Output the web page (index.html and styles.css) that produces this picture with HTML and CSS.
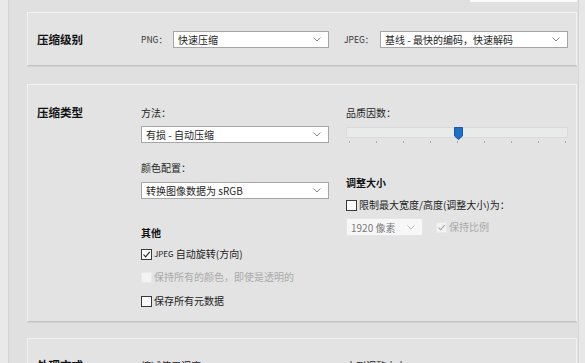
FILE: index.html
```html
<!DOCTYPE html>
<html lang="zh-CN">
<head>
    <meta charset="UTF-8">
    <meta name="viewport" content="width=device-width, initial-scale=1">
    <title>导出设置</title>
    <link rel="stylesheet" href="styles.css">
</head>
<body>
    <div class="page">
        <div class="side-left"></div>
        <div class="main">
            <div class="top-strip"><span class="top-block"></span></div>

            <div class="panel panel-level">
                <div class="section-title">压缩级别</div>
                <div class="field-inline">
                    <span class="inline-label">PNG：</span>
                    <div class="select">快速压缩<svg class="chev" width="8" height="5" viewBox="0 0 8 5"><path d="M0.5 0.5 L4 4 L7.5 0.5" fill="none" stroke="#888" stroke-width="1"/></svg></div>
                </div>
                <div class="field-inline jpeg">
                    <span class="inline-label">JPEG：</span>
                    <div class="select">基线 - 最快的编码，快速解码<svg class="chev" width="8" height="5" viewBox="0 0 8 5"><path d="M0.5 0.5 L4 4 L7.5 0.5" fill="none" stroke="#888" stroke-width="1"/></svg></div>
                </div>
            </div>

            <div class="panel panel-type">
                <div class="section-title">压缩类型</div>
                <div class="col col-left">
                    <div class="label">方法：</div>
                    <div class="select mt6">有损 - 自动压缩<svg class="chev" width="8" height="5" viewBox="0 0 8 5"><path d="M0.5 0.5 L4 4 L7.5 0.5" fill="none" stroke="#888" stroke-width="1"/></svg></div>
                    <div class="label mt18">颜色配置：</div>
                    <div class="select mt7">转换图像数据为 sRGB<svg class="chev" width="8" height="5" viewBox="0 0 8 5"><path d="M0.5 0.5 L4 4 L7.5 0.5" fill="none" stroke="#888" stroke-width="1"/></svg></div>
                    <div class="sub-title mt27">其他</div>
                    <label class="check mt7"><span class="box checked"><svg width="9" height="9" viewBox="0 0 9 9"><path d="M1.5 4.5 L3.6 6.8 L7.8 1.8" fill="none" stroke="#222" stroke-width="1.1"/></svg></span><span class="small-caps">JPEG</span>&nbsp;自动旋转(方向)</label>
                    <label class="check disabled mt9"><span class="box"></span>保持所有的颜色，即使是透明的</label>
                    <label class="check mt10"><span class="box"></span>保存所有元数据</label>
                </div>
                <div class="col col-right">
                    <div class="label">品质因数：</div>
                    <div class="slider mt7">
                        <svg class="thumb" width="9" height="13" viewBox="0 0 9 13"><path d="M0.5 0.5 H8.5 V9 L4.5 12.5 L0.5 9 Z" fill="#1f6fc6" stroke="#1559a8" stroke-width="1"/></svg>
                    </div>
                    <div class="ticks">
                        <i></i><i></i><i></i><i></i><i></i><i></i><i></i><i></i><i></i>
                    </div>
                    <div class="sub-title mt33">调整大小</div>
                    <label class="check mt8"><span class="box"></span>限制最大宽度/高度(调整大小)为：</label>
                    <div class="resize-row mt6">
                        <div class="select small disabled">1920 像素<svg class="chev" width="8" height="5" viewBox="0 0 8 5"><path d="M0.5 0.5 L4 4 L7.5 0.5" fill="none" stroke="#bbb" stroke-width="1"/></svg></div>
                        <label class="check disabled"><span class="box"><svg width="9" height="9" viewBox="0 0 9 9"><path d="M1.5 4.5 L3.6 6.8 L7.8 1.8" fill="none" stroke="#aaa" stroke-width="1.1"/></svg></span>保持比例</label>
                    </div>
                </div>
            </div>

            <div class="panel panel-more">
                <div class="section-title">处理方式</div>
                <div class="col"><div class="label">缩减使用调度</div></div>
                <div class="col"><div class="label">小到调整大小</div></div>
            </div>
        </div>
        <div class="side-right"></div>
    </div>
</body>
</html>
```

FILE: styles.css
```css
body {
    margin: 0;
    font-family: "Noto Sans CJK SC", "Noto Sans", sans-serif;
    font-size: 10px;
    color: #262626;
    background: #e0e0e0;
}
.page {
    display: flex;
    height: 363px;
    overflow: hidden;
}
.side-left {
    flex: none;
    width: 8px;
    background: #e9e9e9;
    border-right: 1px solid #d4d4d4;
}
.side-right {
    flex: none;
    width: 6px;
    background: #e7e7e7;
    border-left: 1px solid #d6d6d6;
}
.main {
    flex: 1;
    min-width: 0;
    padding: 10px 1px 0 18px;
}
.top-strip {
    display: flex;
    justify-content: flex-end;
    height: 2px;
    margin-top: -10px;
    margin-bottom: 10px;
}
.top-block {
    width: 107px;
    height: 2px;
    background: #fafafa;
}
.panel {
    display: grid;
    grid-template-columns: 87px 188px 222px;
    column-gap: 17px;
    padding: 0 7px 0 9px;
    background: #e3e3e3;
    border: 1px solid #f1f1f1;
    border-bottom-color: #c3c3c3;
    box-shadow: 0 1px 0 #d3d3d3;
}
.panel-level {
    height: 52px;
    align-items: center;
}
.panel-type {
    margin-top: 18px;
    height: 238px;
    padding-top: 19px;
    box-sizing: border-box;
    align-items: start;
}
.panel-more {
    margin-top: 16px;
    height: 60px;
    padding-top: 18px;
    box-sizing: border-box;
    align-items: start;
}
.section-title {
    font-size: 11.5px;
    font-weight: bold;
    color: #111;
    line-height: 16px;
}
.field-inline {
    display: flex;
    align-items: center;
}
.field-inline.jpeg {
    margin-left: -2px;
}
.inline-label {
    font-size: 8.5px;
    width: 32px;
    color: #333;
}
.jpeg .inline-label {
    width: 36px;
}
.select {
    flex: 1;
    display: flex;
    align-items: center;
    justify-content: space-between;
    height: 15px;
    padding: 0 7px 0 4px;
    background: #fff;
    border: 1px solid #a6a6a6;
    font-size: 10px;
    color: #1e1e1e;
    line-height: 15px;
}
.select.small {
    flex: none;
    width: 64px;
    height: 16px;
}
.select.disabled {
    border-color: #e6e6e6;
    background: #f7f7f7;
    color: #7a7a7a;
}
.col {
    display: flex;
    flex-direction: column;
    padding-top: 2px;
}
.label {
    line-height: 14px;
}
.sub-title {
    font-weight: bold;
    color: #111;
    line-height: 14px;
}
.check {
    display: flex;
    align-items: center;
    line-height: 14px;
    color: #222;
}
.check.disabled {
    color: #a9a9a9;
}
.box {
    width: 9px;
    height: 9px;
    margin-right: 2px;
    border: 1px solid #3a3a3a;
    background: #fbfbfb;
    display: flex;
}
.check.disabled .box {
    border-color: #e8e8e8;
    background: #f3f3f3;
}
.small-caps {
    font-size: 8px;
}
.slider {
    position: relative;
    height: 9px;
    background: #e9ebeb;
    border: 1px solid #dadada;
}
.thumb {
    position: absolute;
    left: 107px;
    top: -1px;
}
.ticks {
    display: flex;
    justify-content: space-between;
    padding: 0 2px 0 3px;
    margin-top: 3px;
}
.ticks i {
    width: 1px;
    height: 2px;
    background: #a8a8a8;
}
.resize-row {
    display: flex;
    align-items: center;
    gap: 13px;
}
.mt6 { margin-top: 6px; }
.mt7 { margin-top: 7px; }
.mt8 { margin-top: 8px; }
.mt9 { margin-top: 9px; }
.mt10 { margin-top: 10px; }
.mt18 { margin-top: 18px; }
.mt27 { margin-top: 27px; }
.mt33 { margin-top: 33px; }
```
